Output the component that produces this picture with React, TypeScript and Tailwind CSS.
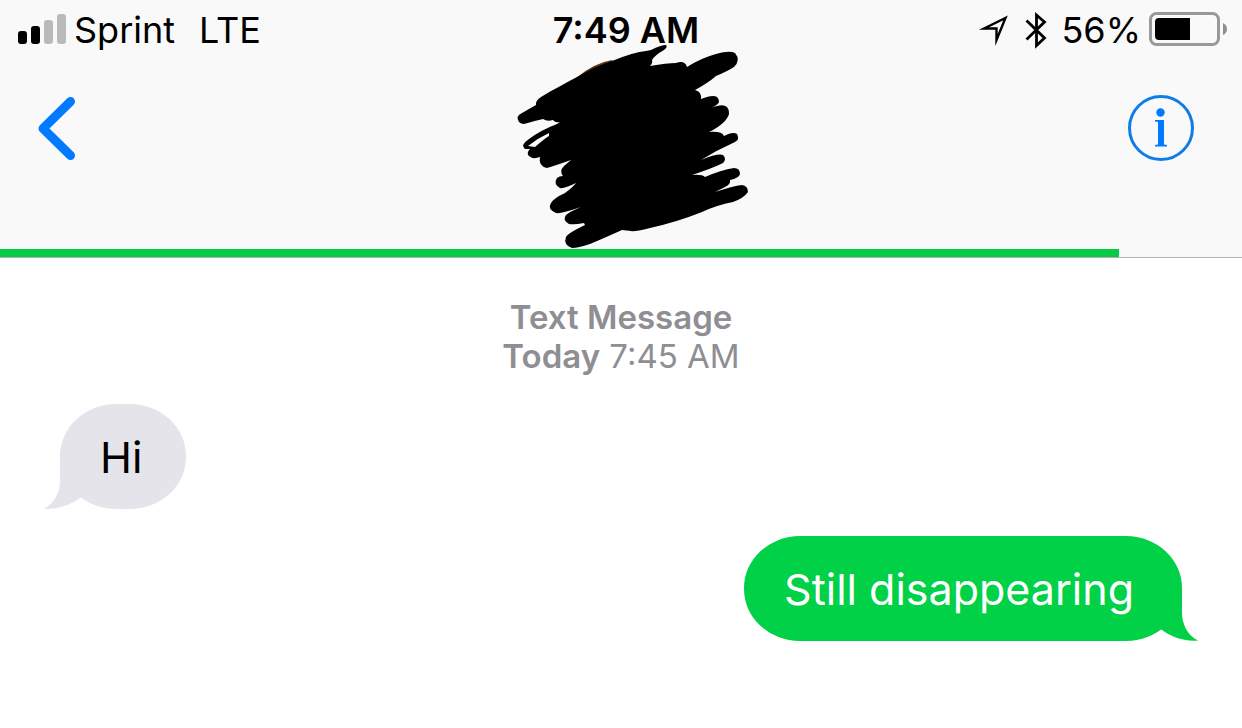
import clsx from 'clsx'

interface Message {
  id: number
  text: string
  sent: boolean
}

const messages: Message[] = [
  { id: 1, text: 'Hi', sent: false },
  { id: 2, text: 'Still disappearing', sent: true },
]

function SignalBars() {
  return (
    <svg width="48" height="32" viewBox="0 0 48 32" role="img" aria-label="Signal: 2 of 4 bars">
      <rect x="0" y="17" width="9" height="13" rx="3" fill="#000" />
      <rect x="13" y="12" width="9" height="18" rx="3" fill="#000" />
      <rect x="26" y="6" width="9" height="24" rx="3" fill="#bababa" />
      <rect x="39" y="0" width="9" height="30" rx="3" fill="#bababa" />
    </svg>
  )
}

function LocationArrow() {
  return (
    <svg width="31" height="31" viewBox="0 0 31 31" fill="none" aria-hidden="true">
      <path d="M6 13.5 27.5 3 18.5 25V13.5Z" stroke="#000" strokeWidth="2.4" strokeMiterlimit="8" />
    </svg>
  )
}

function BluetoothIcon() {
  return (
    <svg width="22" height="38" viewBox="0 0 22 38" fill="none" aria-hidden="true">
      <path d="M1.5 9.5 19.5 27 11.5 34.5V4L19.5 11 1.5 28.5" stroke="#000" strokeWidth="2.8" />
    </svg>
  )
}

function BatteryIcon() {
  return (
    <svg width="78" height="36" viewBox="0 0 78 36" fill="none" aria-hidden="true">
      <rect x="1.5" y="1.5" width="68" height="31" rx="6" stroke="#999" strokeWidth="3" />
      <path d="M10 6H41V28H10Q6 28 6 24V10Q6 6 10 6Z" fill="#000" />
      <path d="M74 11Q78 13 78 17T74 23Z" fill="#8f8f8f" />
    </svg>
  )
}

/* Contact photo and name, scribbled over */
function HiddenContact() {
  return (
    <svg width="260" height="209" viewBox="491 40 260 209" role="img" aria-label="Contact hidden">
      <path d="M576 78Q594 63 612 60L616 70Z" fill="#5a3518" />
      <path
        fillRule="evenodd"
        d="M519 122Q515 116 522 113L536 105Q535 101 541 97C554 89 566 83 579 76C592 68 603 64 612 61Q634 52 646 51L651 50Q661 45 666 45Q668 47 664 50Q655 55 652 60Q653 63 650 66Q667 63 676 63Q685 60 687 67Q701 58 716 54Q730 50 735 53Q741 60 734 67Q728 71 716 76Q708 83 695 90Q702 92 701 99Q713 94 717 97Q722 102 715 106L711 108Q723 103 727 107Q732 113 725 121Q718 128 709 132Q722 131 724 136Q733 131 737 134Q740 139 735 142Q717 150 701 160Q718 153 723 155Q727 159 723 163Q713 168 692 175Q702 174 705 177Q721 170 734 168Q740 168 740 174Q739 178 730 180Q731 184 725 187L715 192Q733 186 742 185Q748 186 748 192Q744 198 733 202Q717 205 702 212Q677 222 650 228Q634 232 631 231L622 230Q602 239 590 244Q578 248 572 248Q563 245 566 237Q568 233 585 225L584 223Q574 225 569 224Q562 220 566 215Q569 212 581 207Q561 214 556 213Q547 209 551 203Q554 198 565 193Q573 187 576 183Q564 189 560 188Q553 184 557 178Q559 176 563 176Q559 171 564 166L571 160Q554 166 547 168Q538 166 540 157Q532 160 528 155Q527 152 530 149L525 149Q520 145 529 139Q541 130 557 124L560 122Q555 123 553 120Q547 122 543 119Q534 121 524 124Q521 124 519 122ZM528 146 535 147Q544 139 549 136L549 133Q538 138 528 146Z"
        fill="#000"
      />
    </svg>
  )
}

function Bubble({ message }: { message: Message }) {
  return (
    <div
      className={clsx(
        'relative flex min-h-[105px] items-center rounded-[56px/52px] text-[43px] leading-[52px]',
        message.sent ? 'ml-auto bg-[#00d147] pr-12 pl-10 text-white' : 'mr-auto bg-[#e5e4ea] pr-11 pl-10 text-black'
      )}
    >
      <svg
        width="50"
        height="60"
        viewBox="0 0 50 60"
        aria-hidden="true"
        className={clsx('absolute bottom-0', message.sent ? '-right-4 -scale-x-100' : '-left-4')}
      >
        <path
          d="M16 7V31C16 43 11 54 0 59.5C14 61 28 55 36 49L50 40V7Z"
          fill={message.sent ? '#00d147' : '#e5e4ea'}
        />
      </svg>
      <p className="relative">{message.text}</p>
    </div>
  )
}

export default function App() {
  return (
    <div className="min-h-screen bg-white font-['Inter','Liberation_Sans',sans-serif] text-black">
      <header className="border-b border-[#b2b2b2] bg-[#f9f9f9]">
        {/* Status bar */}
        <div className="grid h-[60px] grid-cols-[1fr_auto_1fr] items-center text-[36px] leading-10">
          <div className="flex items-center gap-2 pl-[18px]">
            <SignalBars />
            <span>Sprint</span>
            <span className="pl-4">LTE</span>
          </div>
          <time className="pl-2.5 font-semibold">7:49 AM</time>
          <div className="flex items-center justify-end gap-2 pr-[15px]">
            <LocationArrow />
            <span className="pr-1.5 pl-2">
              <BluetoothIcon />
            </span>
            <span>56%</span>
            <BatteryIcon />
          </div>
        </div>

        {/* Navigation */}
        <nav className="grid grid-cols-[1fr_auto_1fr] items-start">
          <button type="button" aria-label="Back" className="mt-9 ml-[38px] justify-self-start">
            <svg width="38" height="64" viewBox="0 0 38 64" fill="none" aria-hidden="true">
              <path
                d="M32.5 5.5 5 32.5 32.5 59.5"
                stroke="#007aff"
                strokeWidth="9"
                strokeLinecap="round"
                strokeLinejoin="round"
              />
            </svg>
          </button>
          <div className="-mt-5">
            <HiddenContact />
          </div>
          <button type="button" aria-label="Details" className="mt-[35px] mr-12 justify-self-end">
            <svg width="66" height="66" viewBox="0 0 66 66" fill="none" aria-hidden="true">
              <circle cx="33" cy="33" r="31.5" stroke="#0f7de8" strokeWidth="3" />
              <circle cx="32.5" cy="17.5" r="4.2" fill="#007aff" />
              <path d="M27 25H36V49.5L39 50V51.5H27V50L30 49.5V27L27 26.5Z" fill="#007aff" />
            </svg>
          </button>
        </nav>

        {/* Sending progress */}
        <div className="h-2 w-[90.1%] bg-[#04ca48]" role="progressbar" aria-label="Sending" aria-valuenow={90} />
      </header>

      <main className="px-[60px] pt-10 pb-20">
        <div className="text-center text-[33px] leading-[39px] text-[#8e8e93]">
          <p className="font-semibold">Text Message</p>
          <p>
            <span className="font-semibold">Today</span> 7:45 AM
          </p>
        </div>
        <div className="mt-7 flex flex-col gap-[27px]">
          {messages.map((message) => (
            <Bubble key={message.id} message={message} />
          ))}
        </div>
      </main>
    </div>
  )
}
